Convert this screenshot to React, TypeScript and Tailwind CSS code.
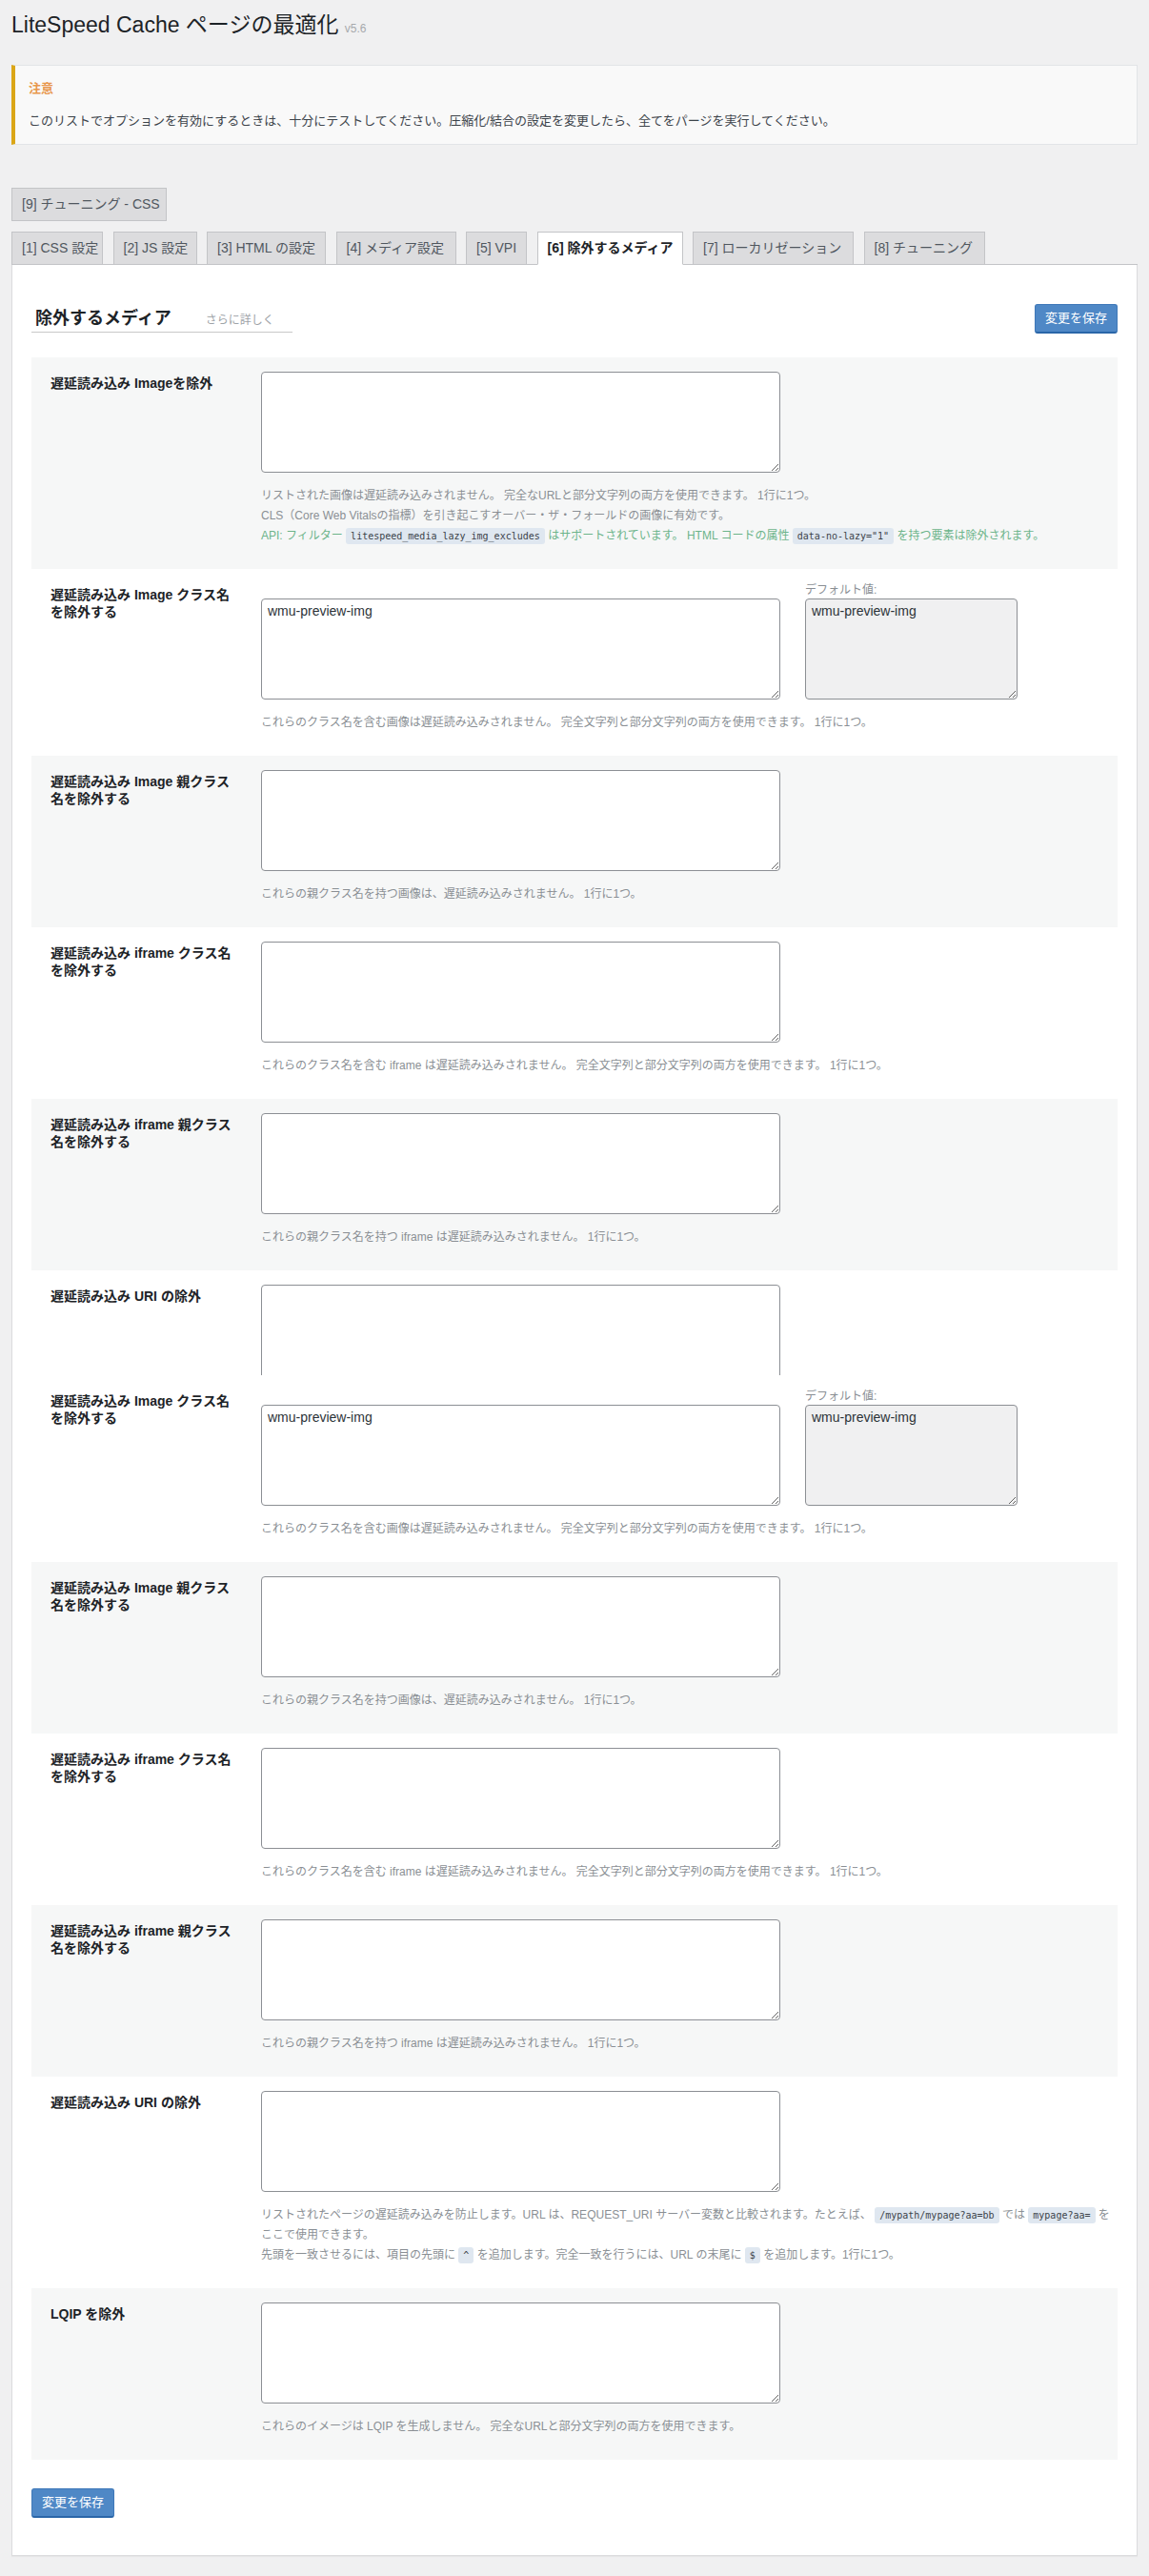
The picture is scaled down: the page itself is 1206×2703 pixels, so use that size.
import React from "react";

const FONT = "font-['Liberation_Sans','Noto_Sans_CJK_JP',sans-serif]";

function Code({ children }: { children: React.ReactNode }) {
  return (
    <code className="inline-block rounded-[3px] bg-[#dfe7f0] px-[5px] py-[2px] align-baseline font-['DejaVu_Sans_Mono',monospace] text-[10px] leading-[13px] text-[#3c434a]">
      {children}
    </code>
  );
}

function Desc({ children }: { children: React.ReactNode }) {
  return <div className="mt-[14px] text-[12px] leading-[21px] text-[#8a8f94]">{children}</div>;
}

function Area({ value, muted, width }: { value?: string; muted?: boolean; width: string }) {
  return (
    <textarea
      readOnly
      defaultValue={value ?? ""}
      className={`${width} block h-[106px] rounded-[4px] border border-[#8c8f94] px-[6px] py-[2px] text-[14px] leading-[20px] text-[#2c3338] outline-none ${FONT} ${
        muted ? "bg-[#f0f0f1]" : "bg-white"
      }`}
    />
  );
}

type Row = {
  label: string;
  gray: boolean;
  def?: boolean;
  clip?: boolean;
  desc?: React.ReactNode;
};

const imgDesc = (
  <>
    <div>リストされた画像は遅延読み込みされません。 完全なURLと部分文字列の両方を使用できます。 1行に1つ。</div>
    <div>CLS（Core Web Vitalsの指標）を引き起こすオーバー・ザ・フォールドの画像に有効です。</div>
    <div className="text-[#6cb48a]">
      API: フィルター <Code>litespeed_media_lazy_img_excludes</Code> はサポートされています。 HTML コードの属性{" "}
      <Code>data-no-lazy="1"</Code> を持つ要素は除外されます。
    </div>
  </>
);

const clsDesc = "これらのクラス名を含む画像は遅延読み込みされません。 完全文字列と部分文字列の両方を使用できます。 1行に1つ。";
const parentDesc = "これらの親クラス名を持つ画像は、遅延読み込みされません。 1行に1つ。";
const iframeDesc = "これらのクラス名を含む iframe は遅延読み込みされません。 完全文字列と部分文字列の両方を使用できます。 1行に1つ。";
const iframeParentDesc = "これらの親クラス名を持つ iframe は遅延読み込みされません。 1行に1つ。";

const uriDesc = (
  <>
    <div>
      <span>リストされたページの遅延読み込みを防止します。URL は、REQUEST_URI サーバー変数と比較されます。たとえば、</span>{" "}
      <Code>/mypath/mypage?aa=bb</Code> <span>では</span> <Code>mypage?aa=</Code> <span>を</span>
      <span>ここで使用できます。</span>
    </div>
    <div>
      先頭を一致させるには、項目の先頭に <Code>^</Code> を追加します。完全一致を行うには、URL の末尾に <Code>$</Code>{" "}
      を追加します。1行に1つ。
    </div>
  </>
);

const rows: Row[] = [
  { label: "遅延読み込み Imageを除外", gray: true, desc: imgDesc },
  { label: "遅延読み込み Image クラス名を除外する", gray: false, def: true, desc: clsDesc },
  { label: "遅延読み込み Image 親クラス名を除外する", gray: true, desc: parentDesc },
  { label: "遅延読み込み iframe クラス名を除外する", gray: false, desc: iframeDesc },
  { label: "遅延読み込み iframe 親クラス名を除外する", gray: true, desc: iframeParentDesc },
  { label: "遅延読み込み URI の除外", gray: false, clip: true },
  { label: "遅延読み込み Image クラス名を除外する", gray: false, def: true, desc: clsDesc },
  { label: "遅延読み込み Image 親クラス名を除外する", gray: true, desc: parentDesc },
  { label: "遅延読み込み iframe クラス名を除外する", gray: false, desc: iframeDesc },
  { label: "遅延読み込み iframe 親クラス名を除外する", gray: true, desc: iframeParentDesc },
  { label: "遅延読み込み URI の除外", gray: false, desc: uriDesc },
  {
    label: "LQIP を除外",
    gray: true,
    desc: "これらのイメージは LQIP を生成しません。 完全なURLと部分文字列の両方を使用できます。",
  },
];

const tabs = [
  { t: "[1] CSS 設定", w: "w-[96px]" },
  { t: "[2] JS 設定", w: "w-[88px]" },
  { t: "[3] HTML の設定", w: "w-[125px]" },
  { t: "[4] メディア設定", w: "w-[126px]" },
  { t: "[5] VPI", w: "w-[64px]" },
  { t: "[6] 除外するメディア", w: "w-[153px]", active: true },
  { t: "[7] ローカリゼーション", w: "w-[169px]" },
  { t: "[8] チューニング", w: "w-[127px]" },
];

function SaveButton() {
  return (
    <button className="h-[31px] rounded-[3px] border border-[#3f78b8] border-b-2 border-b-[#2a66a8] bg-[#4f88c6] px-[10px] text-[13px] text-white">
      変更を保存
    </button>
  );
}

function SettingRow({ row }: { row: Row }) {
  return (
    <div className={`${row.gray ? "bg-[#f6f7f7]" : "bg-white"} ${row.clip ? "h-[110px] overflow-hidden" : ""} flex pl-[20px]`}>
      <div className="w-[221px] shrink-0 pt-[18px]">
        <div className="w-[194px] text-[14px] font-bold leading-[18px] text-[#1d2327]">{row.label}</div>
      </div>
      <div className="flex-1 pt-[15px] pb-[24px]">
        {row.def ? (
          <div className="flex items-end gap-[26px]">
            <Area width="w-[545px]" value="wmu-preview-img" />
            <div>
              <div className="mb-[2px] text-[12px] leading-[14px] text-[#8a8f94]">デフォルト値:</div>
              <Area width="w-[223px]" value="wmu-preview-img" muted />
            </div>
          </div>
        ) : (
          <Area width="w-[545px]" />
        )}
        {row.desc && <Desc>{row.desc}</Desc>}
      </div>
    </div>
  );
}

export default function App() {
  return (
    <div className={`min-h-[2703px] bg-[#f0f0f1] px-[12px] pt-[11px] ${FONT}`}>
      <h1 className="h-[30px] overflow-hidden text-[23px] leading-[30px] text-[#1d2327]">
        LiteSpeed Cache ページの最適化 <span className="text-[12px] text-[#a7aaad]">v5.6</span>
      </h1>

      <div className="mt-[27px] border border-l-4 border-[#e2e4e7] border-l-[#dba617] bg-[#f9f9f9] px-[14px] pb-[14px] pt-[14px]">
        <div className="h-5 text-[13px] font-bold leading-5 text-[#e8974d]">注意</div>
        <p className="mt-[14px] h-5 text-[13px] leading-5 text-[#3c434a]">
          このリストでオプションを有効にするときは、十分にテストしてください。圧縮化/結合の設定を変更したら、全てをパージを実行してください。
        </p>
      </div>

      <div className="mt-[45px] flex">
        <div className="h-[35px] w-[163px] whitespace-nowrap border border-[#c3c4c7] bg-[#dcdcde] px-[10px] text-[14px] leading-[33px] text-[#50575e]">
          [9] チューニング - CSS
        </div>
      </div>

      <div className="mt-[11px] flex h-[35px] gap-[10.5px] border-b border-[#c3c4c7]">
        {tabs.map((tab) => (
          <div
            key={tab.t}
            className={`${tab.w} h-[35px] whitespace-nowrap border px-[10px] text-[14px] leading-[33px] ${
              tab.active
                ? "border-[#c3c4c7] border-b-white bg-white font-bold text-[#1d2327]"
                : "border-[#c3c4c7] bg-[#dcdcde] text-[#50575e]"
            }`}
          >
            {tab.t}
          </div>
        ))}
      </div>

      <div className="border-x border-b border-[#dcdcde] bg-white px-[20px] pb-[39px] pt-[41px] shadow-[0_1px_1px_rgba(0,0,0,0.04)]">
        <div className="flex items-start justify-between">
          <div className="flex h-[30px] w-[274px] items-baseline border-b border-[#c8c8c8] pl-[4px] pt-[2px]">
            <h3 className="text-[18px] font-bold leading-[26px] text-[#1d2327]">除外するメディア</h3>
            <span className="ml-[36px] text-[12px] text-[#9ea3a8]">さらに詳しく</span>
          </div>
          <SaveButton />
        </div>

        <div className="mt-[25px]">
          {rows.map((row, i) => (
            <SettingRow key={i} row={row} />
          ))}
        </div>

        <div className="mt-[30px]">
          <SaveButton />
        </div>
      </div>
    </div>
  );
}
